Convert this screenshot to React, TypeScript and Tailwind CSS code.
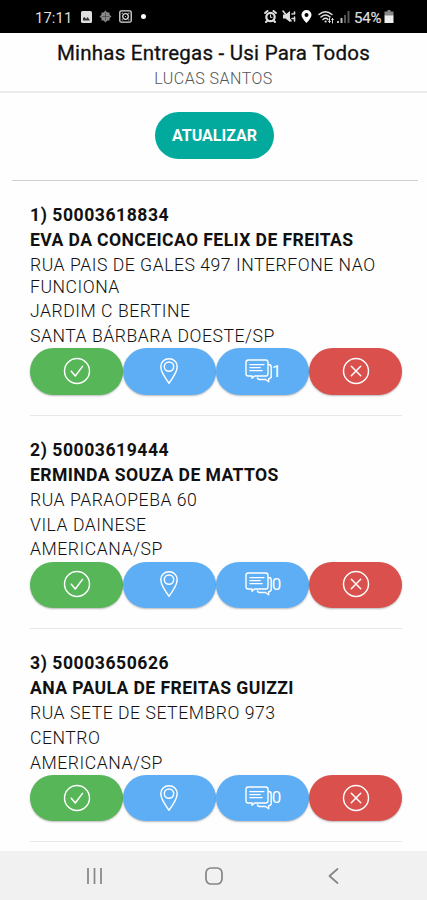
import React from "react";

type Delivery = { title: string; name: string; address: string[]; messages: number };

const deliveries: Delivery[] = [
  {
    title: "1) 50003618834",
    name: "EVA DA CONCEICAO FELIX DE FREITAS",
    address: ["RUA PAIS DE GALES 497 INTERFONE NAO FUNCIONA", "JARDIM C BERTINE", "SANTA BÁRBARA DOESTE/SP"],
    messages: 1,
  },
  {
    title: "2) 50003619444",
    name: "ERMINDA SOUZA DE MATTOS",
    address: ["RUA PARAOPEBA 60", "VILA DAINESE", "AMERICANA/SP"],
    messages: 0,
  },
  {
    title: "3) 50003650626",
    name: "ANA PAULA DE FREITAS GUIZZI",
    address: ["RUA SETE DE SETEMBRO 973", "CENTRO", "AMERICANA/SP"],
    messages: 0,
  },
];

const stroke = { fill: "none", stroke: "currentColor", strokeLinecap: "round", strokeLinejoin: "round" } as const;

function StatusBar() {
  return (
    <div className="flex h-[33px] shrink-0 items-center bg-black pl-[35px] pr-[33px] text-[#dedede]">
      <span className="w-[38px] whitespace-nowrap pt-[3px] text-[14.8px] leading-none tracking-[0.1px]">17:11</span>
      <svg className="ml-[8px]" width="11" height="12" viewBox="0 0 11 12">
        <rect width="11" height="12" rx="1.5" fill="currentColor" />
        <path d="M2 9.5V7l1.6-1 1.5 2 1.6-2L9 9.5Z" fill="#333" />
      </svg>
      <svg className="ml-[7px] text-[#8a8a8a]" width="13" height="13" viewBox="0 0 13 13">
        <path d="M6.5 .5 8.300 2.500 10.500 2.500V4.700L12.500 6.500 10.500 8.300V10.500H8.300L6.500 12.500 4.700 10.500H2.500V8.300L.5 6.500 2.500 4.700V2.500H4.700Z" fill="currentColor" />
        <path d="M6.500 2.500v8M2.500 6.500h8" stroke="#444" strokeWidth=".7" />
      </svg>
      <svg className="ml-[7px]" width="13" height="13" viewBox="0 0 13 13" {...stroke}>
        <rect x=".8" y=".8" width="11.400" height="11.400" rx="1.500" strokeWidth="1.300" />
        <circle cx="6.500" cy="6.500" r="2.800" strokeWidth="1.300" />
        <path d="M6.500 6.500h.01M3.200 3.200h.1M9.800 3.200h.1M3.200 9.800h.1M9.800 9.800h.1" strokeWidth="1.200" />
      </svg>
      <span className="ml-[9px] size-[5px] rounded-full bg-white" />
      <div className="ml-auto flex items-center">
        <svg width="13" height="13" viewBox="0 0 13 13" {...stroke}>
          <circle cx="6.500" cy="7" r="4.200" strokeWidth="2.200" />
          <path d="M1 3 3.500 1M12 3 9.500 1M2 12l1.500-1.500M11 12l-1.500-1.500" strokeWidth="2" />
          <path d="M6.500 5v2.300H8" />
        </svg>
        <svg className="ml-[5px]" width="14" height="13" viewBox="0 0 14 13" {...stroke}>
          <path d="M1 4.500h2.500L8 1v11L3.500 8.500H1Z" fill="currentColor" stroke="none" />
          <path d="M1 1l8 10M10 4h1M12.500 2v2M10 8.500h1M12.500 7v4" strokeWidth="1.600" />
        </svg>
        <svg className="ml-[5px]" width="11" height="13" viewBox="0 0 10 13">
          <path fillRule="evenodd" d="M5 0a5 5 0 0 0-5 5c0 3 5 8 5 8s5-5 5-8a5 5 0 0 0-5-5Zm0 3a2 2 0 1 1 0 4 2 2 0 0 1 0-4Z" fill="#fff" />
        </svg>
        <svg className="ml-[6px]" width="17" height="14" viewBox="0 0 17 14" {...stroke}>
          <path d="M1 4.500Q7.500-1 14 4.500M3 7Q7.500 3 12 7M5 9.500Q7.500 7 10 9.500" strokeWidth="1.500" />
          <path d="M7.500 11.500h.2" strokeWidth="2" />
          <path d="M11.500 8v4.500m-1-1 1 1 1-1M14.500 13V8.500m-1 1 1-1 1 1" />
        </svg>
        <svg className="ml-[2px]" width="13" height="12" viewBox="0 0 13 12">
          <path d="M0 12v-2h2v2ZM3.500 12V7h2v5Z" fill="#bbb" />
          <path d="M7 12V4h2v8ZM10.500 12V0h2v12Z" fill="#555" />
        </svg>
        <span className="ml-[4px] w-[30px] whitespace-nowrap pt-[3px] text-[15px] leading-none tracking-[-0.2px] [-webkit-text-stroke:0.2px_#dedede]">54%</span>
        <svg width="10" height="13" viewBox="0 0 9 13">
          <path d="M3 0h3v1.500h3V6H0V1.500h3Z" fill="#888" />
          <path d="M0 5.500h9V13H0Z" fill="#eee" />
        </svg>
      </div>
    </div>
  );
}

function CheckIcon() {
  return (
    <svg width="28" height="28" viewBox="0 0 28 28" {...stroke}>
      <circle cx="14" cy="14" r="12.500" strokeWidth="1.450" />
      <path d="m8.300 14.200 4 4.800 7.200-9.600" strokeWidth="1.500" />
    </svg>
  );
}

function PinIcon() {
  return (
    <svg width="18" height="26" viewBox="0 0 18 26" {...stroke} strokeWidth="1.450">
      <path d="M9 .8C4.300.8.8 4.200.8 8.600.8 14.400 9 25.200 9 25.200S17.200 14.400 17.200 8.600C17.200 4.200 13.700.8 9 .8Z" />
      <circle cx="9" cy="8.600" r="4.700" />
    </svg>
  );
}

function ChatIcon() {
  return (
    <svg width="27" height="24" viewBox="0 0 27 24" {...stroke} strokeWidth="1.400">
      <path d="M3.300 1h17.400Q23 1 23 3.300v11.400Q23 17 20.700 17H9.500L7 19.300V17H3.300Q1 17 1 14.700V3.300Q1 1 3.300 1Z" />
      <path d="M4.800 5.600h14.200M4.800 8.600h10.500M4.800 11.600h12.500" strokeWidth="1.150" />
      <path d="M23.500 5.500q2.700 0 2.700 2.500v9.500q0 2-2.500 2.200V22.800L20.500 20.500H14.500Q12.800 20.300 12.500 19" />
    </svg>
  );
}

function CloseIcon() {
  return (
    <svg width="28" height="28" viewBox="0 0 28 28" {...stroke}>
      <circle cx="14" cy="14" r="12.500" strokeWidth="1.450" />
      <path d="m9.300 9.300 9.400 9.400m0-9.400-9.400 9.400" strokeWidth="1.500" />
    </svg>
  );
}

function Actions({ messages }: { messages: number }) {
  const base = "flex h-[46.5px] items-center justify-center rounded-full pb-[1px] text-white shadow-[0_1px_2px_rgba(0,0,0,0.28)]";
  return (
    <div className="mt-[0.500px] grid grid-cols-4">
      <button className={base + " bg-[#56b658] pl-[1px]"}><CheckIcon /></button>
      <button className={base + " bg-[#5eaef5]"}><PinIcon /></button>
      <button className={base + " bg-[#5eaef5]"}>
        <ChatIcon />
        <span className="w-[8px] text-[17px] leading-none tracking-[-1px]">{messages}</span>
      </button>
      <button className={base + " bg-[#d9504c] pl-[1px]"}><CloseIcon /></button>
    </div>
  );
}

function Item({ delivery }: { delivery: Delivery }) {
  return (
    <li className="border-b border-[#e8e8e8] pb-[20px] pt-[24.200px]">
      <div className="flex flex-col gap-[3px] px-[0.5px] text-[17.600px] leading-[21.800px] text-[#111]">
        <p className="font-bold tracking-[0.54px]">{delivery.title}</p>
        <p className="font-bold tracking-[0.39px]">{delivery.name}</p>
        {delivery.address.map((line) => (
          <p key={line} className="font-light tracking-[0.53px]">{line}</p>
        ))}
      </div>
      <Actions messages={delivery.messages} />
    </li>
  );
}

export default function App() {
  return (
    <div className="flex h-[900px] w-[427px] flex-col overflow-hidden bg-[#fefefe] font-[Roboto,'Liberation_Sans',sans-serif]">
      <StatusBar />
      <header className="flex h-[60px] shrink-0 flex-col items-center border-b-2 border-[#ececec] pt-[7.5px]">
        <h1 className="text-[20.5px] font-normal leading-[25px] tracking-[0.23px] text-[#111] [-webkit-text-stroke:0.3px_#111]">Minhas Entregas - Usi Para Todos</h1>
        <p className="text-[16px] font-light leading-[25px] tracking-[0.5px] text-[#555]">LUCAS SANTOS</p>
      </header>
      <main className="min-h-0 grow overflow-hidden">
        <div className="ml-[12px] mr-[9px] flex h-[88px] justify-center border-b border-[#cfcfcf] pt-[19px]">
          <button className="mr-[1px] h-[47px] w-[119px] rounded-full bg-[#02a99d] text-[16px] font-bold text-white">ATUALIZAR</button>
        </div>
        <ul className="ml-[29.500px] mr-[25px]">
          {deliveries.map((d) => <Item key={d.title} delivery={d} />)}
        </ul>
      </main>
      <nav className="flex h-[49px] shrink-0 items-center bg-[#f1f1f1] pl-[86px] text-[#858585]">
        <svg width="17" height="16" viewBox="0 0 17 16" {...stroke} strokeLinecap="butt" strokeWidth="1.700">
          <path d="M2 0v16M8.500 0v16M15 0v16" />
        </svg>
        <svg className="ml-[102px]" width="18" height="18" viewBox="0 0 18 18" {...stroke} strokeWidth="1.700">
          <rect x="1" y="1" width="16" height="16" rx="5" />
        </svg>
        <svg className="ml-[105px]" width="11" height="16" viewBox="0 0 11 16" {...stroke} strokeWidth="1.700">
          <path d="M9.500 1 1.500 8l8 7" />
        </svg>
      </nav>
    </div>
  );
}
